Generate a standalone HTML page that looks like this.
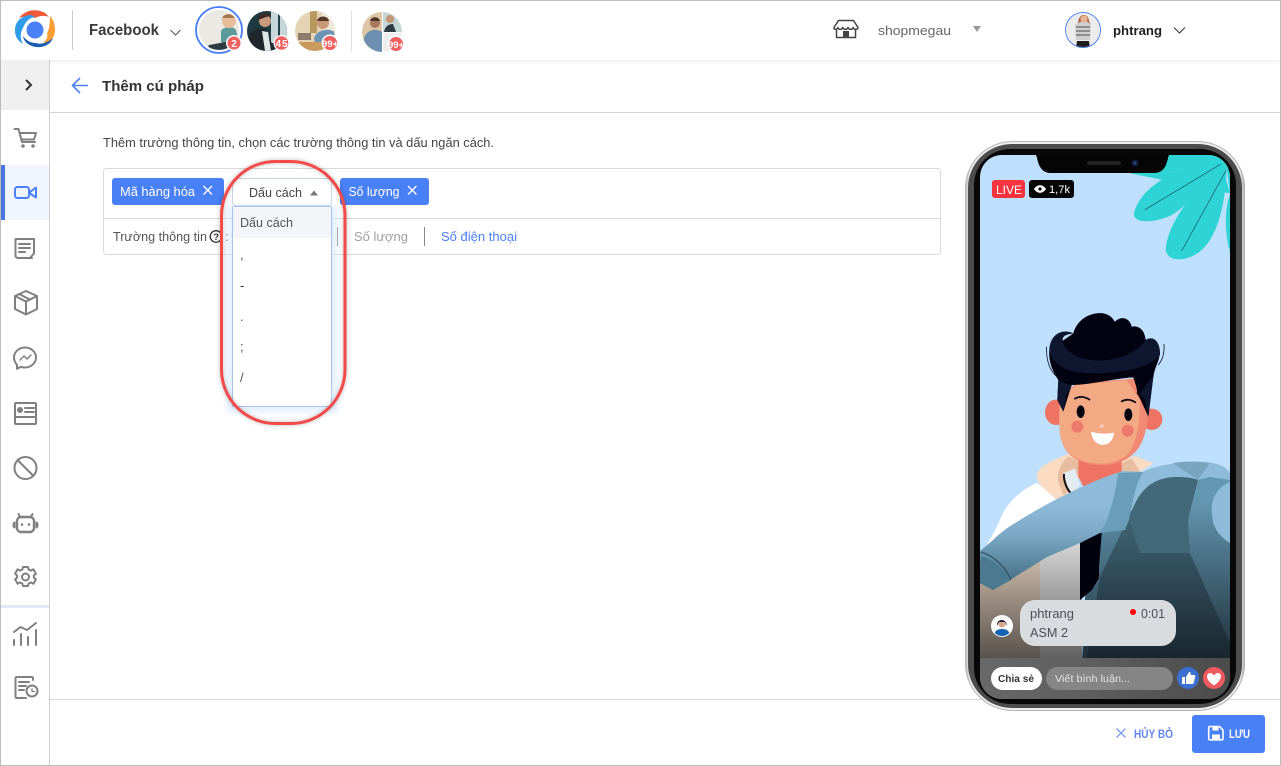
<!DOCTYPE html>
<html lang="vi"><head><meta charset="utf-8"><title>Thêm cú pháp</title>
<style>
html,body{margin:0;padding:0;width:1281px;height:766px;overflow:hidden;background:#fff}
svg{display:block;position:absolute;left:0;top:0}
text{font-family:"Liberation Sans","Noto Sans CJK SC",sans-serif;font-size:13px}
.i{fill:none;stroke:#808080;stroke-width:2;stroke-linejoin:round;stroke-linecap:round}
</style></head><body>
<svg width="1281" height="766" viewBox="0 0 1281 766" xmlns="http://www.w3.org/2000/svg">
<defs>
<filter id="sh" x="-20%" y="-100%" width="140%" height="300%"><feGaussianBlur stdDeviation="3"/></filter>
<filter id="b2" x="-30%" y="-30%" width="160%" height="160%"><feGaussianBlur stdDeviation="2.5"/></filter>
<clipPath id="scr"><rect x="980" y="155" width="250" height="544" rx="22"/></clipPath>
<clipPath id="a1"><circle cx="219" cy="30" r="20"/></clipPath>
<clipPath id="a2"><circle cx="267" cy="31" r="20"/></clipPath>
<clipPath id="a3"><circle cx="315" cy="31" r="20"/></clipPath>
<clipPath id="a4"><circle cx="382" cy="32" r="20"/></clipPath>
<clipPath id="a5"><circle cx="1083" cy="30" r="17"/></clipPath>
<clipPath id="a6"><circle cx="1002" cy="626" r="10"/></clipPath>
<linearGradient id="fr" x1="0" x2="1" y1="0" y2="0"><stop offset="0" stop-color="#bbb"/><stop offset=".02" stop-color="#eee"/><stop offset=".98" stop-color="#eee"/><stop offset="1" stop-color="#aaa"/></linearGradient>
<linearGradient id="sl" gradientUnits="userSpaceOnUse" x1="0" y1="505" x2="0" y2="592"><stop offset="0" stop-color="#8dbbd9"/><stop offset=".35" stop-color="#7aa8c4"/><stop offset="1" stop-color="#3b6478"/></linearGradient>
<linearGradient id="bd" gradientUnits="userSpaceOnUse" x1="0" y1="500" x2="0" y2="660"><stop offset="0" stop-color="#6397b1"/><stop offset="1" stop-color="#1f2f39"/></linearGradient>
<linearGradient id="dk" gradientUnits="userSpaceOnUse" x1="0" y1="510" x2="0" y2="660"><stop offset="0" stop-color="#42687a"/><stop offset="1" stop-color="#18252d"/></linearGradient>
<linearGradient id="pn" x1="0" y1="0" x2="0" y2="1"><stop offset="0" stop-color="#d8d8d8"/><stop offset="1" stop-color="#5f5f5f"/></linearGradient>
<linearGradient id="pb" x1="0" y1="0" x2="0" y2="1"><stop offset="0" stop-color="#cbbaa9"/><stop offset="1" stop-color="#57504a"/></linearGradient>
<linearGradient id="bar" x1="0" x2="1" y1="0" y2="0"><stop offset="0" stop-color="#686868"/><stop offset=".45" stop-color="#5e5e5e"/><stop offset="1" stop-color="#4b4b4b"/></linearGradient>
</defs>

<rect width="1281" height="766" fill="#fff"/>

<!-- title row -->
<rect x="50" y="112" width="1231" height="1" fill="#d6d6d6"/>
<path d="M88 85.500H73M80 78l-7.500 7.500L80 93" fill="none" stroke="#4a80f5" stroke-width="1.600"/>
<text x="102" y="91" font-weight="700" style="font-size:15px" fill="#333" textLength="102" lengthAdjust="spacingAndGlyphs">Thêm cú pháp</text>

<!-- header -->
<rect x="0" y="50" width="1281" height="10" fill="#000" opacity=".12" filter="url(#sh)"/>
<rect x="0" y="0" width="1281" height="60" fill="#fff"/>
<!-- sidebar -->
<rect x="1" y="60" width="48" height="640" fill="#fff"/>
<rect x="1" y="60" width="48" height="50" fill="#f0f0f0"/>
<rect x="49" y="60" width="1" height="706" fill="#cfcfcf"/>
<path d="M26 80l5 5-5 5" fill="none" stroke="#333" stroke-width="2"/>
<rect x="1" y="165" width="48" height="55" fill="#f0f5ff"/>
<rect x="1" y="165" width="4" height="55" fill="#4a76e0"/>
<rect x="1" y="605" width="48" height="3" fill="#e3eaf5"/>

<!-- logo -->
<circle cx="35" cy="30" r="8.500" fill="#4a80f5"/>
<path d="M19 18C24 11 34 8 43 12 46 13 47 15 49 17 44 15 39 16 35 18 31 16 24 16 19 18Z" fill="#f0583a"/>
<path d="M50 16C54 20 55 26 55 30 55 38 49 44 43 43 47 40 48 36 47 33 49 30 50 24 50 16Z" fill="#fb9f35"/>
<path d="M30 15C21 16 15 22 15 30 15 37 18 41 23 44 20 39 20 33 23 28 25 23 28 18 35 17 33 16 32 15 30 15Z" fill="#2f9cec"/>
<path d="M23 36C24 44 33 48 41 47 47 46 51 43 53 38 48 42 43 45 36 43 30 43 26 40 23 36Z" fill="#1d5fb0"/>
<rect x="72" y="10" width="1" height="40" fill="#ccc"/>
<text x="89" y="35" font-weight="700" style="font-size:16px" fill="#3a3a3a" textLength="70" lengthAdjust="spacingAndGlyphs">Facebook</text>
<path d="M170.500 30l5 5 5-5" fill="none" stroke="#555" stroke-width="1"/>

<!-- account avatars -->
<circle cx="219" cy="30" r="23" fill="none" stroke="#4a80f5" stroke-width="1.800"/>
<g clip-path="url(#a1)"><rect x="199" y="10" width="40" height="40" fill="#ebe9e3"/>
<path d="M221 31c2-5 13-5 15-1l3 12-10 3-8-3z" fill="#5d9a9c"/><circle cx="229" cy="21" r="7" fill="#e9bd9b"/><path d="M222 18c2-5 11-5 13 0z" fill="#a3784f"/><path d="M206 50l3-5 22-4 3 9z" fill="#2f3a44"/></g>
<g clip-path="url(#a2)"><rect x="247" y="11" width="40" height="40" fill="#1d3a42"/>
<rect x="271" y="11" width="16" height="32" fill="#c7d8da"/><rect x="278" y="11" width="2" height="32" fill="#22424a"/>
<path d="M249 35c6-8 12-7 17-6l9 22h-26z" fill="#20272c"/><path d="M262 31l6 1 3 19h-6z" fill="#dfe6e6"/>
<circle cx="265" cy="21" r="6" fill="#c89a7e"/><path d="M258 20c0-7 10-9 13-4l-5 1z" fill="#3a2a22"/></g>
<g clip-path="url(#a3)"><rect x="295" y="11" width="40" height="40" fill="#e6d4b7"/>
<rect x="310" y="11" width="7" height="22" fill="#b9985f"/><rect x="322" y="11" width="13" height="20" fill="#f0e9da"/>
<path d="M314 38c3-9 16-10 20-6l2 14-20 2z" fill="#6d93b5"/><circle cx="323" cy="23" r="6" fill="#c99878"/><path d="M317 21c1-6 11-6 12 0z" fill="#54392a"/>
<rect x="295" y="42" width="40" height="9" fill="#c99a5e"/><rect x="298" y="33" width="13" height="7" fill="#8d7b6e"/></g>
<rect x="351" y="11" width="1" height="41" fill="#e2e2e2"/>
<g clip-path="url(#a4)"><rect x="362" y="12" width="40" height="40" fill="#fff"/>
<rect x="362" y="12" width="20" height="40" fill="#dcc6a6"/><path d="M364 38c3-9 13-10 18-6v20h-18z" fill="#6d8fb0"/><circle cx="375" cy="23" r="5" fill="#a9795c"/><path d="M370 21c1-5 9-5 10 0z" fill="#4c3528"/>
<rect x="383" y="12" width="19" height="20" fill="#c4d6d4"/><path d="M384 32c1-6 5-8 9-8l3 8z" fill="#2e3a42"/><circle cx="390" cy="19" r="4" fill="#c49475"/>
<rect x="383" y="33" width="19" height="19" fill="#eeeeee"/></g>
<g font-weight="700" fill="#fff" text-anchor="middle">
<circle cx="234" cy="43" r="8" fill="#fff"/><circle cx="234" cy="43" r="6.500" fill="#f25f5f"/><text x="234" y="47" style="font-size:10px">2</text>
<circle cx="281.500" cy="43" r="8" fill="#fff"/><circle cx="281.500" cy="43" r="6.800" fill="#f25f5f"/><text x="281.500" y="47" style="font-size:10px" textLength="12">45</text>
<circle cx="330" cy="43" r="8.500" fill="#fff"/><circle cx="330" cy="43" r="7" fill="#f25f5f"/><text x="330" y="47" style="font-size:9.500px" textLength="16">99+</text>
<circle cx="396" cy="44" r="8.500" fill="#fff"/><circle cx="396" cy="44" r="7" fill="#f25f5f"/><text x="396" y="48" style="font-size:9.500px" textLength="16">99+</text>
</g>

<!-- header right -->
<g fill="none" stroke="#444" stroke-width="1.500" stroke-linejoin="round">
<path d="M838.500 20.500h15l4.500 7c0 2.500-4 2.500-4.800 0-.8 2.500-4.400 2.500-5.200 0-.8 2.500-4.400 2.500-5.200 0-.8 2.500-4.400 2.500-5 0-.6 2.500-4.500 2.500-3.800 0z"/>
<path d="M836.500 30v7.500h19V30"/>
</g>
<rect x="843" y="31" width="6" height="6.500" fill="#444"/>
<text x="878" y="35" fill="#666" textLength="73" lengthAdjust="spacingAndGlyphs">shopmegau</text>
<path d="M973 26h8l-4 6z" fill="#999"/>
<circle cx="1083" cy="30" r="17.500" fill="#eee" stroke="#4a80f5" stroke-width="1"/>
<g clip-path="url(#a5)"><rect x="1065" y="12" width="36" height="36" fill="#ececec"/>
<path d="M1075 24l7-3 9 2-1 17h-14z" fill="#cfcfcf"/><path d="M1076 27h14M1076 31h14M1076 35h14" stroke="#666" stroke-width="1.200"/>
<path d="M1077 41h12l1 7h-14z" fill="#1e1e1e"/><path d="M1078 23c0-9 9-11 11-3l1 4-4-3h-3z" fill="#b26b48"/><circle cx="1084" cy="19" r="3.500" fill="#e5b596"/></g>
<text x="1113" y="35" font-weight="700" fill="#1f1f1f" textLength="49" lengthAdjust="spacingAndGlyphs">phtrang</text>
<path d="M1174 27.500l5.500 5.500 5.500-5.500" fill="none" stroke="#444" stroke-width="1.200"/>

<!-- sidebar icons -->
<g class="i">
<path d="M14.500 129h4l3.500 13h13M19.500 133h16.500l-2 6.500H21"/><circle cx="23" cy="146" r=".8"/><circle cx="33" cy="146" r=".8"/>
<g style="stroke:#4a80f5"><rect x="15" y="187" width="14" height="11" rx="2.500"/><path d="M30 192l6-4.500v10l-6-4z"/></g>
<path d="M32 258H18c-1.500 0-2.500-1-2.500-2.500V239h18.500v14.500L30 258"/><path d="M19 244h11M19 248h11M19 252h6"/>
<path d="M26 291l11 5v13l-11 5.500-11-5.500v-13zM15 296l11 5.500 11-5.500M26 301.500v13M19 294l10 5"/>
<path d="M17 365c-2-2.500-3-5-3-7.500 0-5.500 5-10 11-10s11 4.500 11 10-5 10-11 10c-1.500 0-3-.3-4-.7l-4 2z"/><path d="M20 360l4-4 3 3 4-4" style="stroke-width:1.500"/>
<rect x="15" y="403" width="21" height="21" rx="1"/><path d="M15 417h21M25 408h9M25 412h9"/><circle cx="20" cy="410" r="2" style="fill:#777"/>
<circle cx="25.500" cy="468" r="11"/><path d="M17.500 460l16 16"/>
<rect x="17" y="517" width="17" height="15" rx="4" style="stroke-width:2.400"/><path d="M20 517l-1.500-3M31 517l1.500-3"/><path d="M15 522c-1.300 0-2 1-2 3s.7 3 2 3zM36 522c1.300 0 2 1 2 3s-.7 3-2 3z" style="fill:#808080;stroke-width:1"/><path d="M22 524.500v.1M29 524.500v.1" style="stroke-width:2.500"/>
<circle cx="25.500" cy="577" r="3.500"/><path d="M23 567h5l.7 2.600 2.300 1 2.400-1.300 2.500 4.400-2 1.700v2.200l2 1.700-2.500 4.400-2.400-1.300-2.300 1-.7 2.600h-5l-.7-2.600-2.300-1-2.400 1.300-2.500-4.400 2-1.700v-2.200l-2-1.700 2.500-4.400 2.400 1.300 2.300-1z"/>
<path d="M14 632l6.500-5 6.500 3 9-7"/><path d="M14 645v-5M21 645v-11M28 645v-8M36 645v-15"/>
<path d="M33 680v-1.500c0-1-.5-1.500-1.500-1.500H17c-1 0-1.500.5-1.500 1.500v18c0 1 .5 1.500 1.500 1.500h9"/><path d="M19 682h10M19 686h7M19 690h5"/><circle cx="32" cy="691" r="5.500"/><path d="M32 688.500v3h2.500" style="stroke-width:1.200"/>
</g>

<!-- form -->
<text x="103" y="147" fill="#444" textLength="391" lengthAdjust="spacingAndGlyphs">Thêm trường thông tin, chọn các trường thông tin và dấu ngăn cách.</text>
<rect x="103.500" y="168.500" width="837" height="86" rx="3" fill="#fff" stroke="#d9d9d9"/>
<rect x="104" y="218" width="836" height="1" fill="#d9d9d9"/>
<rect x="112" y="178" width="112" height="27" rx="3" fill="#4a80f5"/>
<text x="120" y="196" fill="#fff" textLength="75" lengthAdjust="spacingAndGlyphs">Mã hàng hóa</text>
<path d="M203.500 186l8.500 8.500M212 186l-8.500 8.500" stroke="#fff" stroke-width="1.300"/>
<rect x="340" y="178" width="89" height="27" rx="3" fill="#4a80f5"/>
<text x="348.500" y="196" fill="#fff" textLength="51" lengthAdjust="spacingAndGlyphs">Số lượng</text>
<path d="M408 186l8.500 8.500M416.500 186l-8.500 8.500" stroke="#fff" stroke-width="1.300"/>
<rect x="232.500" y="178.500" width="99" height="27" rx="3" fill="#fff" stroke="#c8d4e8"/>
<text x="249" y="197" fill="#444" textLength="53" lengthAdjust="spacingAndGlyphs">Dấu cách</text>
<path d="M310 195.500l4-5 4 5z" fill="#777"/>
<text x="113" y="241" fill="#555" textLength="94" lengthAdjust="spacingAndGlyphs">Trường thông tin</text>
<circle cx="216" cy="236.500" r="5.800" fill="none" stroke="#333" stroke-width="1.300"/>
<text x="213.200" y="240" fill="#333" font-weight="700" style="font-size:9.500px">?</text>
<text x="225" y="241" fill="#555">:</text>
<rect x="337" y="227" width="1" height="19" fill="#888"/>
<text x="354" y="241" fill="#a0a0a0" textLength="54" lengthAdjust="spacingAndGlyphs">Số lượng</text>
<rect x="424" y="227" width="1" height="19" fill="#888"/>
<text x="441" y="241" fill="#4a80f5" textLength="76" lengthAdjust="spacingAndGlyphs">Số điện thoại</text>

<!-- dropdown -->
<rect x="226" y="206" width="112" height="207" fill="#d5e8ff" opacity=".55" filter="url(#b2)"/>
<rect x="232.500" y="206.500" width="99" height="200" rx="1" fill="#fff" stroke="#a9c4ec"/>
<rect x="233" y="207" width="98" height="31" fill="#f4f5f8"/>
<g fill="#555">
<text x="240" y="227" textLength="53" lengthAdjust="spacingAndGlyphs">Dấu cách</text>
<text x="240" y="259">,</text>
<text x="240" y="290" fill="#333">-</text>
<text x="240" y="321">.</text>
<text x="240" y="351">;</text>
<text x="240" y="382">/</text>
</g>

<!-- red highlight -->
<rect x="221.500" y="161.500" width="123.500" height="262" rx="54" fill="none" stroke="#000" stroke-width="3" opacity=".28" filter="url(#b2)"/>
<rect x="221.500" y="161.500" width="123.500" height="262" rx="54" fill="none" stroke="#f44a4a" stroke-width="3"/>

<!-- footer -->
<rect x="50" y="699" width="1231" height="1" fill="#d9d9d9"/>
<path d="M1116.500 728.500l9 9M1125.500 728.500l-9 9" stroke="#6c8ff0" stroke-width="1.200"/>
<text x="1134" y="738" font-weight="700" fill="#6486ee" style="font-size:11.500px" textLength="39" lengthAdjust="spacingAndGlyphs">HỦY BỎ</text>
<rect x="1192" y="715" width="73" height="38" rx="3" fill="#4a80f5"/>
<path d="M1210 726.500h9.500l3.500 3.500v8.500c0 .8-.5 1.300-1.300 1.300h-11.700c-.8 0-1.300-.5-1.300-1.300v-10.700c0-.8.500-1.300 1.300-1.300z" fill="none" stroke="#fff" stroke-width="1.600"/>
<path d="M1212.500 727h6v3.500h-6zM1212 734.500h8v5h-8z" fill="#fff"/>
<text x="1229" y="738" font-weight="700" fill="#fff" style="font-size:11.500px" textLength="21" lengthAdjust="spacingAndGlyphs">LƯU</text>

<!-- phone -->
<rect x="965" y="141" width="280" height="570" rx="47" fill="url(#fr)"/>
<rect x="965.500" y="141.500" width="279" height="569" rx="47" fill="none" stroke="#b5b5b5"/>
<rect x="968" y="144" width="274" height="564" rx="44" fill="#4c4c4c"/>
<rect x="974" y="149" width="262" height="555" rx="36" fill="#080808"/>
<g clip-path="url(#scr)">
<rect x="980" y="155" width="250" height="544" fill="#bfe0fd"/>

<!-- leaves -->
<g transform="translate(955 135) scale(.33333)" fill="#2dd3d5">
<path d="M525 115C570 125 640 120 695 98L800 85 825 175 815 100 750 140 800 95 695 98 640 60H825V175Z"/>
<path d="M695 98C620 125 550 175 537 235 535 265 590 265 640 245 690 222 725 170 750 140L805 95 800 85Z"/>
<path d="M750 140C690 200 635 280 632 345 640 385 700 380 740 345 790 300 812 200 815 100L800 90Z"/>
<path d="M525 115C570 125 640 120 695 98L800 85V60H640Z"/>
<path d="M825 180C805 230 812 310 825 350Z"/>
<path d="M798 87L570 224M814 105L680 348" stroke="#174a5a" stroke-width="2" fill="none"/>
</g>

<!-- figure: shirt, trousers, torso -->
<path d="M1037 483C1020 490 1005 505 1000 520L993 534 985 548 1040 520 1060 500Z" fill="#fff"/>
<rect x="980" y="556" width="60" height="104" fill="url(#pb)"/>
<rect x="1040" y="540" width="42" height="120" fill="url(#pn)"/>
<path d="M1090 500H1230V699H1080Z" fill="url(#bd)"/>
<path d="M1177 477L1198 480 1188 520 1190 553 1230 643V699H1080L1100 577 1132 510Z" fill="url(#dk)"/>
<path d="M1080 543L1102 530 1099 567V578L1092 590 1080 600Z" fill="#02020f"/>

<!-- head -->
<g transform="translate(980 300) scale(.33333)">
<path d="M265 462C220 480 170 500 170 530 175 560 210 580 230 600L290 570 295 480Z" fill="#fbdcc3"/>
<path d="M265 470C240 490 230 520 235 545L250 585 295 560 295 480Z" fill="#e8bd9f"/>
<path d="M425 480L465 468 520 490 480 515 425 515Z" fill="#fbdcc3"/>
<path d="M425 490L455 475 480 515H425Z" fill="#e8bd9f"/>
<path d="M250 520L285 505 300 555 270 580Z" fill="#e2edf3"/>
<path d="M252 522C250 545 262 570 275 582" fill="none" stroke="#111" stroke-width="6"/>
<ellipse cx="228" cy="337" rx="33" ry="38" fill="#ef7362"/>
<circle cx="515" cy="358" r="32" fill="#ef7362"/>
<path d="M295 470H425V515L310 560 295 530Z" fill="#ef7362"/>
<path d="M240 290C235 380 235 430 270 465 310 500 400 510 450 470 490 440 505 390 505 310L470 235 290 250Z" fill="#f28a73"/>
<path d="M240 290C235 380 235 430 270 462 310 495 395 505 440 465 475 430 480 350 480 300L440 240 290 255Z" fill="#f4a985"/>
<path d="M280 100C290 60 330 35 370 40 395 45 400 60 405 65 425 45 450 55 455 80 480 75 495 95 497 120 520 105 540 125 540 160 535 190 525 200 520 230L505 350C490 320 480 290 470 280 475 270 460 235 460 232 400 235 330 255 275 255L250 335 232 300 235 240C215 210 205 180 208 150Z" fill="#020210"/>
<path d="M208 150C210 100 250 85 280 100 250 105 245 110 250 130 280 200 440 200 497 120 520 105 540 125 540 165 500 215 380 225 300 218 260 215 215 190 208 150Z" fill="#0f1630"/>
<path d="M235 240L232 300 250 335 258 285 275 258ZM520 230L505 350 495 300 480 280 522 225Z" fill="#0f1630"/>
<path d="M200 140C198 175 205 205 228 228M552 132C554 160 548 178 535 195" fill="none" stroke="#0f1630" stroke-width="2.500"/>
<ellipse cx="302" cy="335" rx="12" ry="19" fill="#050510"/>
<ellipse cx="445" cy="344" rx="12" ry="19" fill="#050510"/>
<path d="M283 297Q305 283 330 300M423 305Q445 292 468 308" fill="none" stroke="#050510" stroke-width="5"/>
<circle cx="292" cy="380" r="18" fill="#ee7a6b"/><circle cx="443" cy="392" r="18" fill="#ee7a6b"/>
<path d="M358 382Q366 362 372 380 366 388 358 382Z" fill="#f9c9b5"/>
<path d="M333 395Q365 405 402 398 398 435 365 435 338 430 333 395Z" fill="#fff"/>
</g>

<!-- jacket + sleeve -->
<path d="M980 551L993 540C1003 530 1015 523 1020 520 1047 503 1090 481 1123 471L1143 472C1156 464 1193 460 1213 463 1223 465 1230 470 1230 474V480L1198 480 1177 477 1132 510 1100 533 1080 543 1047 557 1010 580 993 590 980 583Z" fill="url(#sl)"/>
<path d="M1118 473L1143 472C1135 485 1132 505 1129 520L1125 530 1100 533 1107 520C1112 505 1116 490 1118 473Z" fill="#6a9db8"/>
<path d="M1173 463L1198 480 1210 463C1198 461 1185 461 1173 463Z" fill="#7aa5bf"/>
<path d="M1129 520C1137 490 1153 477 1177 477 1187 477 1193 478 1198 480L1188 520 1190 553 1140 553Z" fill="#42687a"/>
<path d="M1198 480L1210 477 1230 480V643L1190 553 1188 520Z" fill="url(#bd)"/>
<path d="M1230 482C1217 487 1210 500 1212 515 1213 530 1222 538 1230 543Z" fill="#8dbbd9"/>
<path d="M981 556C994 560 1006 570 1011 580L993 590 980 583Z" fill="#4a7990"/>
<path d="M981 552C995 556 1006 568 1011 580" fill="none" stroke="#2a4a5a" stroke-width="1"/>

<!-- bottom bar -->
<rect x="980" y="658" width="250" height="41" fill="url(#bar)"/>
</g>

<!-- notch and speaker -->
<path d="M1036 155h133c-1 2-1 4-2 7-2 7-6 11-13 11h-103c-7 0-11-4-13-11-1-3-1-5-2-7z" fill="#050505"/>
<rect x="1087" y="161" width="34" height="4" rx="2" fill="#222"/>
<circle cx="1135" cy="163" r="3.500" fill="#111c3a"/><circle cx="1135" cy="163" r="1.500" fill="#2a4a8a"/>

<!-- live -->
<rect x="992" y="180" width="33" height="18" rx="3" fill="#f5333f"/>
<text x="996" y="194" fill="#fff" style="font-size:12px" textLength="26" lengthAdjust="spacingAndGlyphs">LIVE</text>
<rect x="1029" y="180" width="45" height="18" rx="3" fill="#060606"/>
<path d="M1034 189c3-5 9-5 12 0-3 5-9 5-12 0z" fill="#fff"/><circle cx="1040" cy="189" r="1.600" fill="#060606"/>
<text x="1049" y="193" fill="#fff" style="font-size:11px" textLength="21" lengthAdjust="spacingAndGlyphs">1,7k</text>

<!-- comment -->
<circle cx="1002" cy="626" r="11" fill="#fff"/>
<g clip-path="url(#a6)"><path d="M994 637c0-6 3-8 8-8s8 2 8 8z" fill="#1463b4"/><circle cx="1002" cy="624" r="3.500" fill="#d9a78c"/><path d="M997 626c-1-8 10-8 10 0l-2-4h-6z" fill="#1c1c3c"/></g>
<rect x="1020" y="600" width="156" height="46" rx="15" fill="#d9dcdf"/>
<text x="1030" y="618" fill="#4d4d55" style="font-size:12.500px" textLength="44" lengthAdjust="spacingAndGlyphs">phtrang</text>
<circle cx="1133" cy="612" r="3" fill="#f00"/>
<text x="1141" y="618" fill="#4d4d55" style="font-size:12.500px" textLength="24" lengthAdjust="spacingAndGlyphs">0:01</text>
<text x="1030" y="637" fill="#4d4d55" style="font-size:12.500px" textLength="38" lengthAdjust="spacingAndGlyphs">ASM 2</text>

<!-- action bar -->
<rect x="991" y="667" width="51" height="23" rx="11.500" fill="#fff"/>
<text x="998" y="682" font-weight="700" fill="#333" style="font-size:10.500px" textLength="36" lengthAdjust="spacingAndGlyphs">Chia sẻ</text>
<rect x="1046" y="667" width="127" height="23" rx="11.500" fill="#858585"/>
<text x="1055" y="682" fill="#e3e3e3" style="font-size:10.500px" textLength="75" lengthAdjust="spacingAndGlyphs">Viết bình luận...</text>
<circle cx="1188" cy="678" r="11" fill="#3b6fd0"/>
<path d="M1182 677h3v7h-3zM1186 677l3-5c1.500 0 2 1 1.500 3h3.500c1 0 1.500.7 1.200 1.500l-1.300 6c-.2.700-.7 1.500-1.500 1.500H1186z" fill="#fff"/>
<circle cx="1214" cy="678" r="11" fill="#f15a5f"/>
<path d="M1214 685.500c-9-6-8-12-4-12.500 2 0 3 1 4 2.500 1-1.500 2-2.500 4-2.500 4 .5 5 6.500-4 12.500z" fill="#fff"/>

<!-- page border -->
<rect x="0" y="0" width="1281" height="1" fill="#bdbdbd"/>
<rect x="0" y="0" width="1" height="766" fill="#bdbdbd"/>
<rect x="1280" y="0" width="1" height="766" fill="#bdbdbd"/>
<rect x="0" y="765" width="1281" height="1" fill="#bdbdbd"/>
</svg>
</body></html>
